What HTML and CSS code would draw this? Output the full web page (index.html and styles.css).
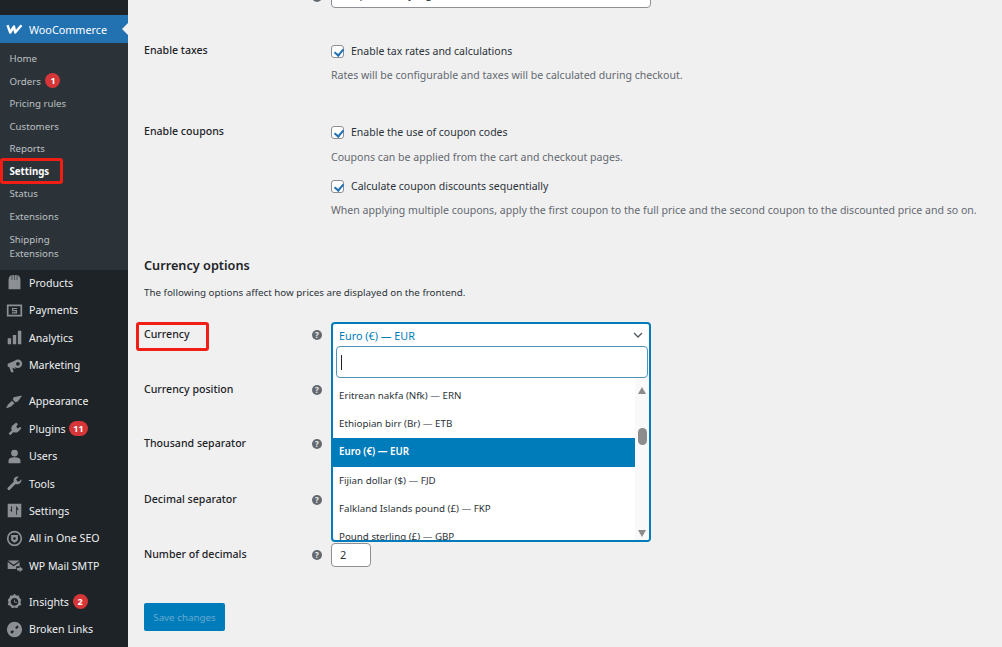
FILE: index.html
```html
<!DOCTYPE html>
<html lang="en">
<head>
<meta charset="utf-8">
<title>WooCommerce settings</title>
<link rel="stylesheet" href="styles.css">
</head>
<body>
<div class="page">
<aside class="side">
  <div class="woo">
    <svg class="woo-logo" viewBox="0 0 17 10"><path d="M1.500 1.200L4.200 8.500L8 2.500L9.200 8.500L15.500 1.200" fill="none" stroke="#fff" stroke-width="2.400" stroke-linejoin="round"/></svg>
    <span>WooCommerce</span>
    <i class="woo-arrow"></i>
  </div>
  <ul class="sub">
    <li>Home</li>
    <li>Orders <b class="badge">1</b></li>
    <li>Pricing rules</li>
    <li>Customers</li>
    <li>Reports</li>
    <li class="current">Settings<i class="mark mark-side"></i></li>
    <li>Status</li>
    <li>Extensions</li>
    <li class="two">Shipping<br>Extensions</li>
  </ul>
  <ul class="menu">
    <li><svg viewBox="0 0 20 20"><path d="M3 18V7c0-3.500 2-5.500 4-5.500h6c2 0 4 2 4 5.500v11z"/><path d="M7 2v5M10 2v5M13 2v5" stroke="#1d2327" stroke-width=".7"/></svg>Products</li>
    <li><svg viewBox="0 0 20 20"><path fill-rule="evenodd" d="M1 3h18v14H1zM3 5v10h14V5z"/><path d="M7 7h6v1.300H8.500v1.200H13V13.500H7v-1.300h4.500V10.800H7z"/></svg>Payments</li>
    <li><svg viewBox="0 0 20 20"><path d="M2 11h4v7H2zM8 7h4v11H8zM14 2h4v16h-4z"/></svg>Analytics</li>
    <li class="gap"><svg viewBox="0 0 20 20"><path d="M2 8l9-4v10l-3.500-1.500L9 18H6l-2-6-2-.5z"/><circle cx="14" cy="8" r="5"/><circle cx="14" cy="8" r="2.200" fill="#1d2327"/></svg>Marketing</li>
    <li><svg viewBox="0 0 20 20"><path d="M9 5l10-2-5 7-3 1-3-3zM7 9l3 3-3 3c-2 2-4 2-7 3 1-2 2-4 3-5z"/></svg>Appearance</li>
    <li><svg viewBox="0 0 20 20"><path d="M12 3l2 2-2 3 2 2 3-2 1 2-4 4c-2 1-4 1-5 0l-4 4-2-2 4-4c-1-1-1-3 0-5z"/></svg>Plugins <b class="badge wide">11</b></li>
    <li><svg viewBox="0 0 20 20"><circle cx="10" cy="6" r="4"/><path d="M3 18v-3c0-3 3-4 7-4s7 1 7 4v3z"/></svg>Users</li>
    <li><svg viewBox="0 0 20 20"><path d="M18 5l-3 3-2-1-1-2 3-3c-3-1-6 1-6 4v2l-7 7c-1 1 0 3 2 3l7-7h2c3 0 6-3 5-6z"/></svg>Tools</li>
    <li><svg viewBox="0 0 20 20"><path fill-rule="evenodd" d="M2 2h16v16H2zM6 5v4H4.500L7 12l-.001-7zM12 5v10h1V9h2l-2.500-4z"/><path d="M4 13h4v1H4zM6 14h1v2H6z"/></svg>Settings</li>
    <li><svg viewBox="0 0 20 20"><path fill-rule="evenodd" d="M10 1a9 9 0 1 0 0 18 9 9 0 0 0 0-18zm0 2a7 7 0 1 1 0 14 7 7 0 0 1 0-14z"/><path d="M6 6h8v5c0 2-2 3-4 4-2-1-4-2-4-4z"/><circle cx="10" cy="10" r="1.600" fill="#1d2327"/></svg>All in One SEO</li>
    <li class="gap"><svg viewBox="0 0 20 20"><path d="M2 4h14l-7 5zM2 6l7 5 7-5v5h-4v3H2z"/><path d="M13 13h3v-2l4 3.500-4 3.500v-2h-3z"/></svg>WP Mail SMTP</li>
    <li><svg viewBox="0 0 20 20"><path fill-rule="evenodd" d="M10 1l2 2 3 0 1 3 2 2-1 3 1 3-3 1-2 3-3-1-3 1-2-3-3-1 1-3-1-3 2-2 1-3 3 0zM10 6a4.500 4.500 0 1 0 .001 0z"/><path d="M10 8v3h3" stroke="#8c8f94" fill="none"/></svg>Insights <b class="badge">2</b></li>
    <li><svg viewBox="0 0 20 20"><path fill-rule="evenodd" d="M10 1a9 9 0 1 0 0 18 9 9 0 0 0 0-18zM13 5l2 2-2.500 2.500-2-2zM7.500 10.500l2 2L7 15l-2-2z"/><path d="M7 11l6-6" stroke="#8c8f94"/></svg>Broken Links</li>
  </ul>
</aside>
<main class="main">
  <div class="clipped"><span class="help"></span><div class="cut-input">Shop currency, eg</div></div>

  <section class="row row-taxes">
    <div class="label">Enable taxes</div>
    <div class="field">
      <label class="check"><i class="box"></i>Enable tax rates and calculations</label>
      <p class="note">Rates will be configurable and taxes will be calculated during checkout.</p>
    </div>
  </section>

  <section class="row row-coupons">
    <div class="label">Enable coupons</div>
    <div class="field">
      <label class="check"><i class="box"></i>Enable the use of coupon codes</label>
      <p class="note">Coupons can be applied from the cart and checkout pages.</p>
      <label class="check second"><i class="box"></i>Calculate coupon discounts sequentially</label>
      <p class="note last">When applying multiple coupons, apply the first coupon to the full price and the second coupon to the discounted price and so on.</p>
    </div>
  </section>

  <h2 class="heading">Currency options</h2>
  <p class="intro">The following options affect how prices are displayed on the frontend.</p>

  <section class="opt opt-currency">
    <div class="label">Currency<i class="mark mark-cur"></i></div>
    <span class="help">?</span>
    <div class="dropdown">
      <div class="dd-value">Euro (€) — EUR<svg class="chev" viewBox="0 0 10 6"><path d="M1 1l4 4 4-4" fill="none" stroke="#50575e" stroke-width="1.300"/></svg></div>
      <div class="dd-search"><i class="caret"></i></div>
      <div class="dd-list">
        <ul class="dd-items">
          <li>Eritrean nakfa (Nfk) — ERN</li>
          <li>Ethiopian birr (Br) — ETB</li>
          <li class="on">Euro (€) — EUR</li>
          <li>Fijian dollar ($) — FJD</li>
          <li>Falkland Islands pound (£) — FKP</li>
          <li>Pound sterling (£) — GBP</li>
        </ul>
        <div class="bar"><i class="up"></i><i class="thumb"></i><i class="down"></i></div>
      </div>
    </div>
  </section>
  <section class="opt opt-pos"><div class="label">Currency position</div><span class="help">?</span></section>
  <section class="opt opt-thou"><div class="label">Thousand separator</div><span class="help">?</span></section>
  <section class="opt opt-dec"><div class="label">Decimal separator</div><span class="help">?</span></section>
  <section class="opt opt-num"><div class="label">Number of decimals</div><span class="help">?</span><div class="num">2</div></section>

  <button class="save" type="button">Save changes</button>
</main>
</div>
</body>
</html>
```

FILE: styles.css
```css
* { box-sizing: border-box; }
html, body { margin: 0; padding: 0; height: 100%; }
body { font-family: "Noto Sans", "Open Sans", sans-serif; font-size: 10.5px; background: #f0f0f1; color: #1d2327; overflow: hidden; }
ul { list-style: none; margin: 0; padding: 0; }
p { margin: 0; }
.page { display: flex; width: 1002px; height: 647px; overflow: hidden; }

.side { width: 128px; flex: none; background: #1d2327; padding-top: 15px; color: #f0f0f1; }
.woo { height: 28px; background: #2271b1; color: #fff; display: flex; align-items: center; padding-left: 6px; gap: 6px; position: relative; font-size: 10.8px; }
.woo-logo { width: 17px; height: 10px; }
.woo-arrow { position: absolute; right: 0; top: 8px; border: 6px solid transparent; border-right-color: #f0f0f1; border-left-width: 0; }

.sub { background: #2c3338; height: 227px; padding: 5.400px 0 0 9.500px; color: #bcc0c4; font-size: 9.7px; }
.sub li { height: 22.5px; line-height: 22px; position: relative; }
.sub .two { line-height: 14px; padding-top: 5px; height: 36px; }
.current { color: #fff; font-weight: 700; }
.badge { display: inline-block; min-width: 15px; height: 15px; padding: 0 4px; border-radius: 8px; background: #d63638; color: #fff; font-size: 9px; font-weight: 700; line-height: 15px; text-align: center; margin-left: 2px; vertical-align: 1px; }
.badge.wide { min-width: 18px; }

.menu li { height: 27.36px; display: flex; align-items: center; gap: 4px; padding-left: 6px; font-size: 10.6px; color: #f0f0f1; white-space: pre; }
.menu li:first-child { margin-top: -.7px; }
.menu .gap { margin-bottom: 9px; }
.menu svg { width: 17px; height: 17px; flex: none; fill: #8c8f94; margin-right: 2px; }
.menu .badge { margin-left: -3px; }

.mark { position: absolute; border: 3px solid #f01e14; border-radius: 3px; pointer-events: none; }
.mark-side { left: -9.500px; top: -3px; width: 63px; height: 26px; }
.mark-cur { left: -8px; top: -5px; width: 73px; height: 29px; }

.main { flex: 1; padding-left: 16px; position: relative; min-width: 0; }
.clipped { height: 8px; position: relative; }
.clipped .help { position: absolute; left: 168px; top: -11px; }
.cut-input { position: absolute; left: 187px; top: -24px; width: 320px; height: 32px; background: #fff; border: 1px solid #8c8f94; border-radius: 4px; padding: 9px 8px; font-size: 11px; color: #2c3338; white-space: nowrap; }

.row { display: flex; }
.label { width: 168px; flex: none; font-weight: 500; color: #1d2327; font-size: 10.6px; line-height: 14px; position: relative; }
.field { padding-left: 19px; }
.row-taxes { margin-top: 35px; height: 81px; }
.row-coupons { height: 132px; }
.check { display: flex; align-items: center; gap: 7px; font-size: 10.5px; color: #2c3338; height: 14px; margin-top: 1px; }
.box { width: 13px; height: 13px; background: #fff; border: 1px solid #8c8f94; border-radius: 3px; position: relative; flex: none; }
.box::after { content: ""; position: absolute; left: 4px; top: 1px; width: 4px; height: 7px; border: solid #2271b1; border-width: 0 2px 2px 0; transform: rotate(40deg); }
.note { color: #646970; font-size: 10.57px; line-height: 14px; margin-top: 10px; white-space: nowrap; }
.row-coupons .note { margin-top: 11px; }
.row-coupons .second { margin-top: 15px; }
.row-coupons .last { margin-top: 10px; }
.heading { margin: 0; font-size: 12.700px; font-weight: 600; line-height: 18px; color: #1d2327; }
.intro { font-size: 9.800px; line-height: 14px; margin-top: 12px; color: #2c3338; }

.opt { display: flex; position: relative; align-items: flex-start; }
.help { width: 10px; height: 10px; border-radius: 50%; background: #646970; color: #f0f0f1; font-size: 8px; font-weight: 700; line-height: 10px; text-align: center; flex: none; margin-top: 3px; display: block; }
.opt-currency { margin-top: 27px; height: 55px; }
.opt-pos { height: 54px; }
.opt-thou { height: 56px; }
.opt-dec { height: 55px; }
.opt-num { height: 56px; }
.num { margin-left: 9px; margin-top: -4px; width: 40px; height: 24px; background: #fff; border: 1px solid #8c8f94; border-radius: 4px; padding: 3px 8px; font-size: 11px; line-height: 16px; color: #2c3338; }

.dropdown { position: absolute; left: 187px; top: -5px; width: 320px; height: 220px; background: #fff; border: 2px solid #007cba; border-radius: 4px; z-index: 2; overflow: hidden; display: flex; flex-direction: column; }
.dd-value { height: 22px; flex: none; padding-left: 6px; color: #007cba; font-size: 10.8px; line-height: 21px; display: flex; justify-content: space-between; align-items: center; padding-right: 6px; }
.chev { width: 10px; height: 6px; }
.dd-search { height: 32px; flex: none; margin: 0 1px 0 3px; border: 1px solid #4f94b8; border-radius: 4px; background: #fff; display: flex; align-items: center; padding-left: 4px; }
.caret { width: 1px; height: 15px; background: #1d2327; }
.dd-list { display: flex; flex: 1; min-height: 0; margin-left: -1px; }
.dd-items { flex: 1; padding-top: 4px; }
.dd-items li { height: 28.2px; line-height: 28px; padding-left: 7px; font-size: 9.750px; color: #2c3338; white-space: nowrap; }
.dd-items .on { background: #007cba; color: #fff; font-weight: 600; }
.bar { width: 14px; flex: none; background: #f9f9f9; position: relative; }
.up, .down, .thumb { position: absolute; display: block; }
.up { left: 3px; top: 9px; border: 4.500px solid transparent; border-bottom: 7px solid #8c8c8c; border-top: 0; }
.down { left: 3px; bottom: 3px; border: 4.500px solid transparent; border-top: 7px solid #8c8c8c; border-bottom: 0; }
.thumb { left: 3px; top: 50px; width: 9px; height: 17px; border-radius: 5px; background: #8c8c8c; }

.save { display: block; width: 81px; height: 28px; background: #007cba; border: 0; border-radius: 2px; padding: 0; color: #66a9cf; font: 9.8px "Noto Sans", sans-serif; }
```
